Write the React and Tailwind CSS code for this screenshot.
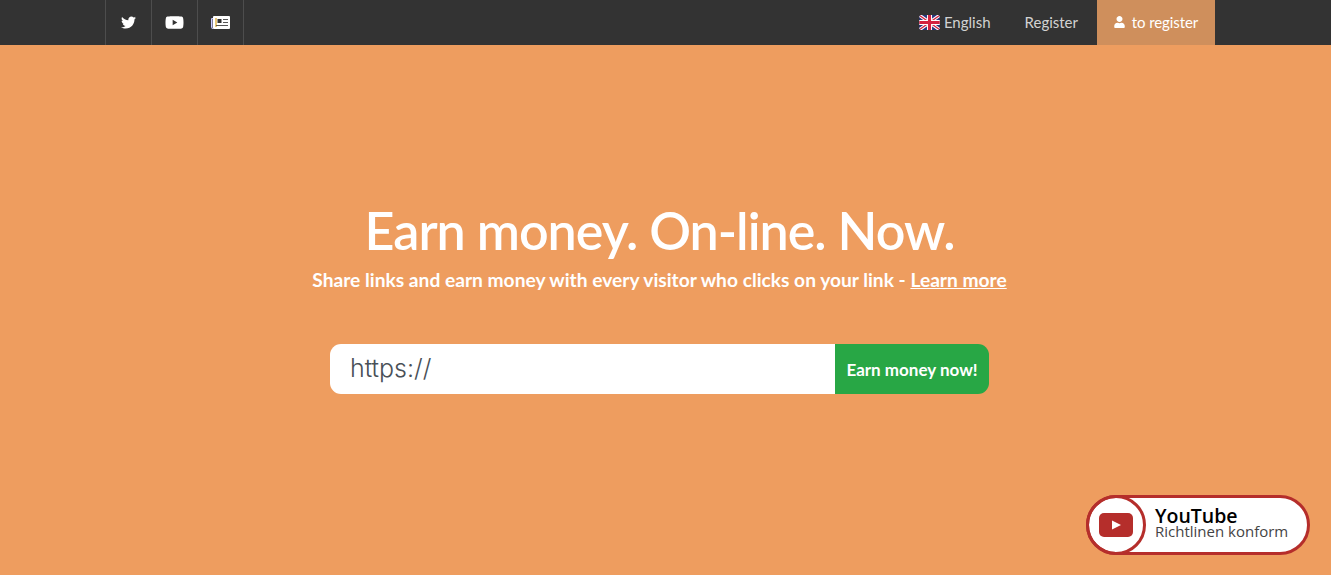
import { FaTwitter, FaYoutube, FaUser } from 'react-icons/fa';

function UkFlag() {
  return (
    <svg viewBox="0 0 60 44" className="w-[21px] h-[15px]">
      <rect width="60" height="44" rx="5" fill="#27347c" />
      <path d="M2 2L58 42M58 2L2 42" stroke="#fff" strokeWidth="10" />
      <path d="M2 2L58 42M58 2L2 42" stroke="#d3213f" strokeWidth="4" />
      <path d="M30 0V44M0 22H60" stroke="#fff" strokeWidth="15" />
      <path d="M30 0V44M0 22H60" stroke="#d3213f" strokeWidth="9" />
    </svg>
  );
}

function NewsIcon() {
  return (
    <svg viewBox="0 0 19 13" className="w-[19px] h-[13px]">
      <path d="M0.5 2.5H2V12.5H1.5A1 1 0 0 1 0.5 11.5Z" fill="none" stroke="#c9c9ff" />
      <rect x="2" y="0" width="17" height="13" rx="1" fill="#fff" />
      <rect x="4" y="2" width="2" height="9" fill="#e0b040" opacity="0.7" />
      <rect x="6.5" y="3" width="4" height="4" fill="#333" />
      <path d="M12 3.5H17M12 6.5H17M5 9.5H17" stroke="#555" strokeWidth="1" />
    </svg>
  );
}

function Navbar() {
  const socials = [
    { id: 'twitter', icon: <FaTwitter className="w-[15px] h-[15px]" /> },
    { id: 'youtube', icon: <FaYoutube className="w-[19px] h-[19px]" /> },
    { id: 'news', icon: <NewsIcon /> },
  ];

  return (
    <nav className="flex items-stretch justify-between h-[45px] bg-[#333333] pl-[105px] pr-[116px] font-['Lato',sans-serif]">
      <div className="flex border-l border-[#4d4d4d]">
        {socials.map((s) => (
          <a key={s.id} className="flex items-center justify-center w-[46px] -mt-px border-r border-[#4d4d4d] text-white">
            {s.icon}
          </a>
        ))}
      </div>
      <div className="flex items-stretch text-[15px] text-[#d2d2d2]">
        <a className="flex items-center gap-[4px] mr-[34px]">
          <UkFlag />
          <span className="-mt-px">English</span>
        </a>
        <a className="flex items-center mr-[19px] pb-px">Register</a>
        <a className="flex items-center gap-[7px] w-[118px] justify-center bg-[#cf8f5c] text-white pb-px">
          <FaUser className="w-[11px] h-[12px]" />
          <span className="tracking-[-0.1px]">to register</span>
        </a>
      </div>
    </nav>
  );
}

function Hero() {
  return (
    <section className="flex flex-col items-center pt-[155px] pr-[12px] text-white font-['Lato',sans-serif]">
      <h1 className="text-[52px] leading-[60px] font-semibold tracking-[-1px]">Earn money. On-line. Now.</h1>
      <p className="mt-[6px] text-[19.2px] leading-[28px] font-bold">
        Share links and earn money with every visitor who clicks on your link - <a className="underline">Learn more</a>
      </p>
      <form className="flex w-[659px] h-[50px] mt-[50px] rounded-[11px] overflow-hidden">
        <input
          readOnly
          value="https://"
          className="flex-1 min-w-0 pl-[20px] bg-white text-[25px] text-[#495057] font-['Inter',sans-serif] font-light outline-none"
        />
        <button type="button" className="w-[154px] pt-px bg-[#28a745] text-white text-[17px] font-bold">
          Earn money now!
        </button>
      </form>
    </section>
  );
}

function PolicyBadge() {
  return (
    <div className="absolute left-[1086px] top-[495px] flex items-center w-[224px] h-[60px] rounded-full border-[3px] border-[#b52e2b] bg-white">
      <div className="flex items-center justify-center w-[60px] h-[60px] -ml-[3px] shrink-0 rounded-full border-[3px] border-[#b52e2b]">
        <svg viewBox="0 0 34 24" className="w-[34px] h-[24px]">
          <rect width="34" height="24" rx="5" fill="#b52e2b" />
          <path d="M13 7.5L22 12L13 16.5Z" fill="#fff" />
        </svg>
      </div>
      <div className="flex flex-col -mt-[3px] ml-[9px] font-['Open_Sans',sans-serif]">
        <span className="text-[19.5px] leading-[16px] font-semibold text-black">YouTube</span>
        <span className="text-[15px] leading-[15px] text-[#444]">Richtlinen konform</span>
      </div>
    </div>
  );
}

export default function App() {
  return (
    <div className="relative min-h-[575px] bg-[#ee9d5f] overflow-hidden">
      <Navbar />
      <Hero />
      <PolicyBadge />
    </div>
  );
}
